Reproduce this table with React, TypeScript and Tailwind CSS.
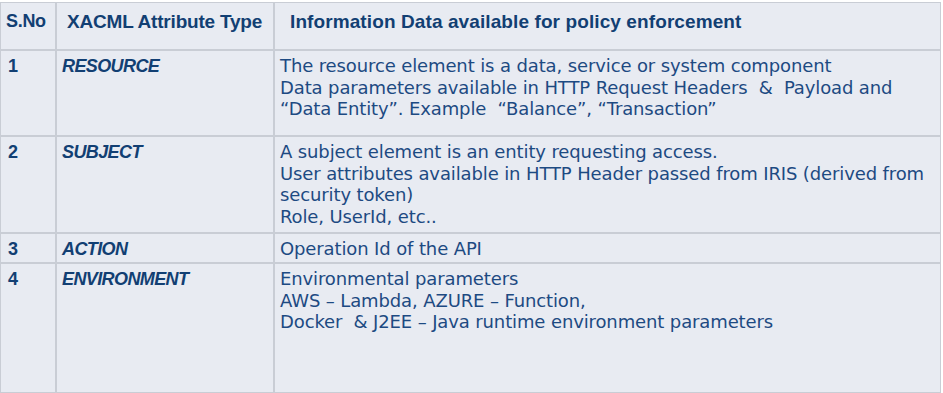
const rows = [
  {
    no: '1',
    type: 'RESOURCE',
    h: 'h-[86px]',
    lines: [
      'The resource element is a data, service or system component',
      'Data parameters available in HTTP Request Headers \u00a0& \u00a0Payload and',
      '\u201cData Entity\u201d. Example \u00a0\u201cBalance\u201d, \u201cTransaction\u201d',
    ],
  },
  {
    no: '2',
    type: 'SUBJECT',
    h: 'h-[97px]',
    lines: [
      'A subject element is an entity requesting access.',
      'User attributes available in HTTP Header passed from IRIS (derived from',
      'security token)',
      'Role, UserId, etc..',
    ],
  },
  {
    no: '3',
    type: 'ACTION',
    h: 'h-[30px]',
    lines: ['Operation Id of the API'],
  },
  {
    no: '4',
    type: 'ENVIRONMENT',
    h: 'h-[128px]',
    lines: [
      'Environmental parameters',
      'AWS \u2013 Lambda, AZURE \u2013 Function,',
      'Docker \u00a0& J2EE \u2013 Java runtime environment parameters',
    ],
  },
]

export default function App() {
  return (
    <div
      className="w-[943px] h-[393px] bg-white pt-[2px] text-[#123f73]"
      style={{ fontFamily: '"Liberation Sans", Arial, sans-serif' }}
    >
      <div className="w-[941px] border border-[#c9cdd5] bg-[#e8ebf2]">
        {/* header */}
        <div className="grid grid-cols-[54px_218px_1fr] h-[48px] border-b-2 border-[#c9cdd5]">
          <div className="pl-[5px] pt-[5px] text-[18px] font-bold tracking-[-0.3px]">S.No</div>
          <div className="border-l-2 border-[#c9cdd5] pl-[10px] pt-[5px] text-[19px] font-bold tracking-[-0.2px]">
            XACML Attribute Type
          </div>
          <div className="border-l-2 border-[#c9cdd5] pl-[15px] pt-[5px] text-[19px] font-bold tracking-[0.1px]">
            Information Data available for policy enforcement
          </div>
        </div>
        {rows.map((r, i) => (
          <div
            key={r.no}
            className={`grid grid-cols-[54px_218px_1fr] ${r.h} ${i < rows.length - 1 ? 'border-b-2 border-[#c9cdd5]' : ''}`}
          >
            <div className="pl-[7px] pt-[5px] text-[18px] font-bold leading-[21px]">{r.no}</div>
            <div className="border-l-2 border-[#c9cdd5] pl-[5px] pt-[5px] text-[18px] font-bold italic leading-[21px] tracking-[-0.6px]">
              {r.type}
            </div>
            <div
              className="border-l-2 border-[#c9cdd5] pl-[5px] pt-[4px] text-[18px] leading-[21.5px] tracking-[-0.12px] text-[#1d4a82]"
              style={{ fontFamily: '"DejaVu Sans", sans-serif' }}
            >
              {r.lines.map((l) => (
                <div key={l} className="whitespace-nowrap">{l}</div>
              ))}
            </div>
          </div>
        ))}
      </div>
    </div>
  )
}
